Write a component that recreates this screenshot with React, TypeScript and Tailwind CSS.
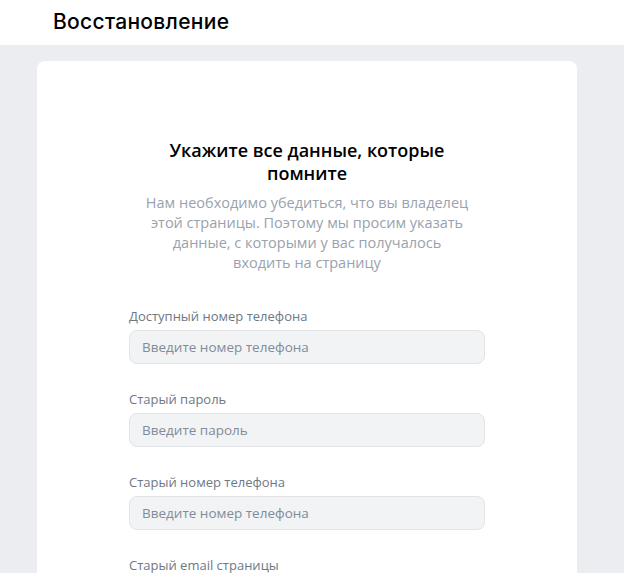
import React from 'react';

const fields = [
  { label: 'Доступный номер телефона', placeholder: 'Введите номер телефона' },
  { label: 'Старый пароль', placeholder: 'Введите пароль' },
  { label: 'Старый номер телефона', placeholder: 'Введите номер телефона' },
  { label: 'Старый email страницы', placeholder: 'Введите email' },
];

export default function App() {
  return (
    <div className="min-h-screen bg-[#ebedf0] font-['Open_Sans',sans-serif]">
      {/* Header */}
      <div className="h-[45px] bg-white flex items-center pl-[53px] pb-[2px]">
        <span className="text-[21px] text-[#000] font-['Inter',sans-serif] font-medium tracking-[0.3px]">
          Восстановление
        </span>
      </div>

      {/* Card */}
      <div className="pt-4 pl-[37px] pr-[47px]">
        <div className="bg-white rounded-lg pt-[78px] pb-10 flex flex-col items-center">
          <h1 className="w-[300px] text-center text-[18px] leading-[23px] font-semibold text-[#000]">
            Укажите все данные, которые помните
          </h1>
          <p className="mt-[8px] w-[324px] text-center text-[14.5px] leading-[20px] text-[#99a2ad]">
            Нам необходимо убедиться, что вы владелец этой страницы. Поэтому мы просим указать
            данные, с которыми у вас получалось входить на страницу
          </p>

          <div className="mt-[34px] w-[356px] flex flex-col gap-[26px]">
            {fields.map((f, i) => (
              <div key={i} className="flex flex-col">
                <label className="text-[13px] leading-[18px] text-[#6d7885] mb-[5px]">{f.label}</label>
                <input
                  placeholder={f.placeholder}
                  className="h-[34px] w-full rounded-lg bg-[#f2f3f5] border border-[#e1e3e6] px-[12px] text-[13.5px] text-black placeholder:text-[#818c99] outline-none"
                />
              </div>
            ))}
          </div>
        </div>
      </div>
    </div>
  );
}
